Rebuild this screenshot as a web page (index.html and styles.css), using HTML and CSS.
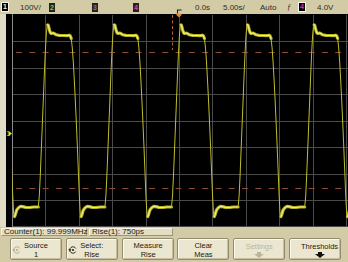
FILE: index.html
```html
<!DOCTYPE html>
<html>
<head>
<meta charset="utf-8">
<link rel="stylesheet" href="styles.css">
</head>
<body>
<div class="scope">
  <div class="topbar">
    <span class="chbox ch1">1</span>
    <span class="cell vdiv">100V/</span>
    <span class="chbox ch2">2</span>
    <span class="chbox ch3">3</span>
    <span class="chbox ch4">4</span>
    <span class="cell tpos">0.0s</span>
    <span class="cell tdiv">5.00s/</span>
    <span class="cell mode">Auto</span>
    <span class="cell slope">ƒ</span>
    <span class="chbox trig">4</span>
    <span class="cell level">4.0V</span>
    <svg class="trigmark" viewBox="0 0 6 9" width="6" height="9">
      <path d="M1.5 4.6 V1 H5.6" fill="none" stroke="#1e1c14" stroke-width="1.1"/>
      <polygon points="0.4,4.4 5.6,4.4 5.6,6 3,8.6 0.4,6" fill="#e48a2a"/>
    </svg>
  </div>

  <div class="display">
    <div class="strip"></div>
    <svg class="screen" viewBox="6 14 342 213" width="342" height="213">
      <defs>
        <clipPath id="grat">
          <rect x="12" y="15" width="336" height="212"/>
        </clipPath>
        <g id="cyc">
          <path class="tr-edge" d="M0,207 L1,196 L2,175 L3,150 L4,125 L5,100 L6,75 L7,52 L8,34 L9,24 L10,25.5 L11,29.5 L12,32.5 L13,33.5 L14,33.2 L15,33 L16,33.6 L18,34.8 L21,35.4 L25,35.5 L29,35.6 L31,35.2 L32,36 L33,39 L34,48 L35,62 L36,80 L37,100 L38,122 L39,145 L40,170 L41,195 L42,214 L42.7,217 L43.5,215 L45,210 L47,207.5 L49,206.3 L51,206.6 L54,207.4 L58,207.5 L62,207 L66.6,207"/>
          <path class="tr-band" d="M9.5,25 L10,25.5 L11,29.5 L12,32.5 L13,33.5 L14,33.2 L15,33 L16,33.6 L18,34.8 L21,35.4 L25,35.5 L29,35.6 L31,35.2 L32,36 L33,38.5"/>
          <path class="tr-band" d="M42.8,216.5 L43.5,215 L45,210 L47,207.5 L49,206.3 L51,206.6 L54,207.4 L58,207.5 L62,207 L66.6,207"/>
          <path class="tr-core" d="M9,24 L10,25.5 L11,29.5 L12,32.5 L13,33.5 L14,33.2 L15,33 L16,33.6 L18,34.8 L21,35.4 L25,35.5 L29,35.6 L31,35.2 L32,36 L33,39"/>
          <path class="tr-core" d="M42.7,217 L43.5,215 L45,210 L47,207.5 L49,206.3 L51,206.6 L54,207.4 L58,207.5 L62,207 L66.6,207"/>
        </g>
      </defs>

      <g class="grid">
        <line x1="45.5" y1="15" x2="45.5" y2="227"/>
        <line x1="79.5" y1="15" x2="79.5" y2="227"/>
        <line x1="112.5" y1="15" x2="112.5" y2="227"/>
        <line x1="146.5" y1="15" x2="146.5" y2="227"/>
        <line x1="179.5" y1="15" x2="179.5" y2="227"/>
        <line x1="212.5" y1="15" x2="212.5" y2="227"/>
        <line x1="246.5" y1="15" x2="246.5" y2="227"/>
        <line x1="279.5" y1="15" x2="279.5" y2="227"/>
        <line x1="313.5" y1="15" x2="313.5" y2="227"/>
        <line x1="346.5" y1="15" x2="346.5" y2="227"/>
        <line x1="12" y1="41.5" x2="348" y2="41.5"/>
        <line x1="12" y1="68.5" x2="348" y2="68.5"/>
        <line x1="12" y1="94.5" x2="348" y2="94.5"/>
        <line x1="12" y1="121.5" x2="348" y2="121.5"/>
        <line x1="12" y1="147.5" x2="348" y2="147.5"/>
        <line x1="12" y1="174.5" x2="348" y2="174.5"/>
        <line x1="12" y1="200.5" x2="348" y2="200.5"/>
        <line x1="12" y1="226.5" x2="348" y2="226.5"/>
      </g>
      <line class="border" x1="12.5" y1="14" x2="12.5" y2="227"/>

      <line class="thresh" x1="12" y1="52.5" x2="348" y2="52.5"/>
      <line class="thresh" x1="12" y1="188.5" x2="348" y2="188.5"/>
      <line class="tmark" x1="172.5" y1="15" x2="172.5" y2="50"/>

      <g clip-path="url(#grat)">
        <use href="#cyc" x="-28.3"/>
        <use href="#cyc" x="38.3"/>
        <use href="#cyc" x="104.9"/>
        <use href="#cyc" x="171.5"/>
        <use href="#cyc" x="238.1"/>
        <use href="#cyc" x="304.7"/>
      </g>

      <text class="gnd" x="6.2" y="136.2">1</text>
      <polygon class="gnd-arrow" points="9,131.2 12,133.6 9,136"/>
    </svg>
  </div>

  <div class="status">
    <span class="readout counter">Counter(1): 99.999MHz</span>
    <span class="readout rise">Rise(1): 750ps</span>
  </div>

  <div class="softkeys">
    <div class="key">
      <svg class="knob dim" viewBox="0 0 10 8" width="10" height="8">
        <path d="M7.8 2.5 A3.2 3.2 0 1 0 7.8 5.5" fill="none" stroke="currentColor" stroke-width="1"/>
        <polygon points="0.2,3.2 3.4,3.2 1.8,5.4" fill="currentColor"/>
        <circle cx="5" cy="4" r="1.1" fill="currentColor"/>
      </svg>
      <span class="label">Source<br>1</span>
    </div>
    <div class="key">
      <svg class="knob" viewBox="0 0 10 8" width="10" height="8">
        <path d="M7.8 2.5 A3.2 3.2 0 1 0 7.8 5.5" fill="none" stroke="currentColor" stroke-width="1"/>
        <polygon points="0.2,3.2 3.4,3.2 1.8,5.4" fill="currentColor"/>
        <circle cx="5" cy="4" r="1.1" fill="currentColor"/>
      </svg>
      <span class="label">Select:<br>Rise</span>
    </div>
    <div class="key">
      <span class="label">Measure<br>Rise</span>
    </div>
    <div class="key">
      <span class="label">Clear<br>Meas</span>
    </div>
    <div class="key disabled">
      <span class="label">Settings
        <svg class="down" viewBox="0 0 10 6" width="10" height="6"><polygon points="3,0 7,0 7,2 10,2 5,6 0,2 3,2"/></svg>
      </span>
    </div>
    <div class="key">
      <span class="label">Thresholds
        <svg class="down" viewBox="0 0 10 6" width="10" height="6"><polygon points="3,0 7,0 7,2 10,2 5,6 0,2 3,2"/></svg>
      </span>
    </div>
  </div>
</div>
</body>
</html>
```

FILE: styles.css
```css
* { box-sizing: border-box; }

html, body {
  margin: 0;
  padding: 0;
}

body {
  width: 348px;
  height: 262px;
  overflow: hidden;
  background: #d3cba5;
  font-family: "Liberation Sans", Arial, sans-serif;
  color: #24221a;
}

.scope {
  width: 348px;
  height: 262px;
  display: flex;
  flex-direction: column;
}

/* ---------- top status bar ---------- */
.topbar {
  position: relative;
  z-index: 2;
  height: 14px;
  flex: 0 0 14px;
  display: flex;
  align-items: center;
  background: #d3cba5;
  font-size: 8px;
  line-height: 9px;
  color: #2e2c24;
}

.cell {
  white-space: nowrap;
}

.chbox {
  width: 6px;
  height: 9px;
  background: #141410;
  text-align: center;
  font-size: 7px;
  line-height: 9px;
  font-weight: bold;
}

.ch1 {
  margin-left: 1px;
  width: 8px;
  height: 10px;
  line-height: 8px;
  color: #f2eedc;
  background: #000;
  border: 1px solid #f6f3e6;
}
.vdiv { margin-left: 11px; width: 29px; }
.ch2 { color: #94c040; background: #22241a; }
.ch3 { margin-left: 37px; color: #9068e0; background: #22241a; }
.ch4 { margin-left: 35px; color: #ee3a9e; background: #22241a; }
.tpos { margin-left: 56px; width: 28px; }
.tdiv { width: 37px; }
.mode { width: 27px; }
.slope { width: 11px; font-family: "Liberation Serif", serif; font-style: italic; }
.trig {
  width: 8px;
  height: 10px;
  line-height: 8px;
  color: #e8309a;
  background: #000;
  border: 1px solid #fbfaf2;
}
.level { margin-left: 11px; }

.trigmark {
  position: absolute;
  left: 176px;
  top: 9px;
  display: block;
}

/* ---------- waveform display ---------- */
.display {
  display: flex;
  height: 213px;
  flex: 0 0 213px;
}

.strip {
  width: 6px;
  background: #e0dbc4;
}

.screen {
  display: block;
  background: #000;
}

.grid line {
  stroke: #4a4a4a;
  stroke-width: 1;
}

.border {
  stroke: #8a8a8a;
  stroke-width: 1;
}

.thresh {
  stroke: #8e4c38;
  stroke-width: 1;
  stroke-dasharray: 6 7.3;
  stroke-dashoffset: 9.3;
}

.tmark {
  stroke: #b8622c;
  stroke-width: 1;
  stroke-dasharray: 3 2.5;
}

.tr-edge {
  fill: none;
  stroke: #c2be2a;
  stroke-width: 1;
  stroke-linejoin: round;
}

.tr-band {
  fill: none;
  stroke: #b8b41e;
  stroke-width: 3.2;
  stroke-linejoin: round;
  stroke-linecap: round;
}

.tr-core {
  fill: none;
  stroke: #f0ee84;
  stroke-width: 1.2;
  stroke-linejoin: round;
}

.gnd {
  fill: #e6e030;
  font-family: "Liberation Sans", Arial, sans-serif;
  font-size: 7px;
}

.gnd-arrow {
  fill: #e6e030;
}

/* ---------- measurement readouts ---------- */
.status {
  height: 10px;
  flex: 0 0 10px;
  display: flex;
  gap: 2px;
  padding: 1px 0 0 1px;
}

.readout {
  height: 8px;
  padding-left: 2px;
  background: #e3ddc3;
  border: 1px solid;
  border-color: #f7f4e6 #9c9478 #9c9478 #f7f4e6;
  font-size: 8px;
  line-height: 6px;
  white-space: nowrap;
  color: #1e1c14;
}

.counter { width: 86px; }
.rise { width: 84px; }

/* ---------- softkeys ---------- */
.softkeys {
  flex: 1;
  display: flex;
  gap: 3.8px;
  padding: 1px 0 0 10px;
}

.key {
  width: 52px;
  height: 22px;
  display: grid;
  grid-template-columns: 11px 1fr 11px;
  align-items: center;
  padding-top: 1px;
  background: #ebe6cf;
  border: 1px solid #948c70;
  border-radius: 2px;
  box-shadow: inset 1px 1px 0 #fbf9ef, inset -1px -1px 0 #c6be9e;
}

.knob {
  grid-column: 1;
  display: block;
  justify-self: end;
  color: #2a281e;
}

.knob.dim {
  color: #b4ac90;
}

.label {
  grid-column: 2;
  text-align: center;
  font-size: 7.5px;
  line-height: 9px;
  color: #1c1a12;
  white-space: nowrap;
}

.down {
  display: block;
  margin: 1px auto 0;
  fill: #111;
}

.disabled .label {
  color: #bdb59a;
}

.disabled .down {
  fill: #bdb59a;
}
```
